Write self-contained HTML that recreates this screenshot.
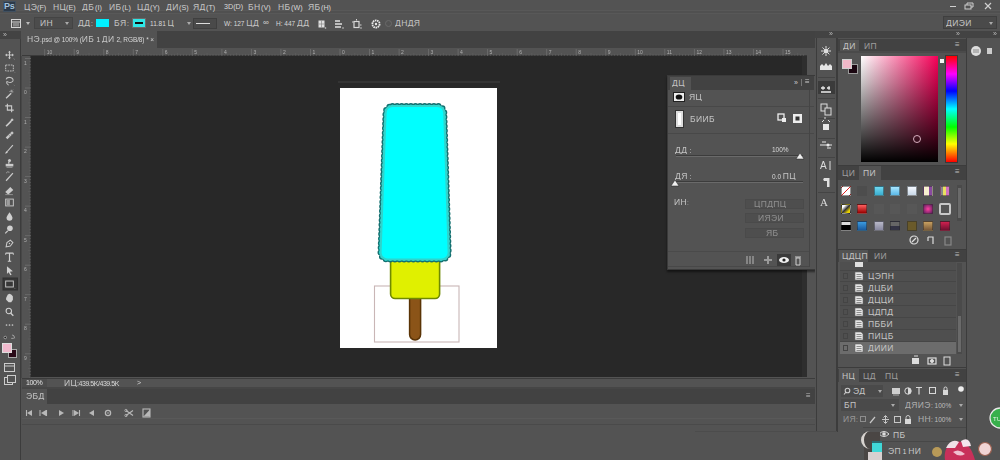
<!DOCTYPE html><html><head><meta charset="utf-8"><style>
*{margin:0;padding:0;box-sizing:border-box}
html,body{width:1000px;height:460px;overflow:hidden;background:#535353}
body{position:relative;font-family:"Liberation Sans",sans-serif;font-size:6.5px;color:#d8d8d8}
.t{position:absolute;white-space:nowrap;line-height:8px}
i.c{display:inline-block;height:7px;vertical-align:-1px;
 background-image:linear-gradient(90deg,transparent 0.4px,rgba(225,225,225,.6) 0.4px,rgba(225,225,225,.6) 2.4px,rgba(225,225,225,.3) 2.4px,rgba(225,225,225,.3) 3.4px,rgba(225,225,225,.65) 3.4px,rgba(225,225,225,.65) 5.6px,transparent 5.6px),
 linear-gradient(transparent 2.8px,rgba(40,40,40,.25) 2.8px,rgba(40,40,40,.25) 3.8px,transparent 3.8px);
 background-repeat:repeat-x}
svg{position:absolute;overflow:visible}
b.z{display:inline-block;font-size:8.5px;font-weight:normal;color:#c4c4c4;letter-spacing:0.4px;line-height:8px;vertical-align:-1px;overflow:hidden;white-space:nowrap}
</style></head><body><div id="w" style="position:absolute;left:0;top:0;width:1000px;height:460px;overflow:hidden;filter:blur(0.35px)">
<div style="position:absolute;left:0px;top:0px;width:1000px;height:15px;background:#535353"></div>
<div style="position:absolute;left:0px;top:10px;width:1000px;height:4px;background:#505050;border-top:1px solid #585858;border-bottom:1px solid #585858"></div>
<div style="position:absolute;left:3px;top:1px;width:13px;height:11px;background:#2c3a4a;border:1px solid #405060"></div>
<div class="t" style="left:4px;top:2px;font-size:9px;color:#a4c2dc;font-weight:bold;line-height:9px;letter-spacing:-0.3px">Ps</div>
<div class="t" style="left:24px;top:3px;"><b class="z" style="width:13.0px">ЦЭ</b><span style="font-size:7.2px">(F)</span></div>
<div class="t" style="left:53px;top:3px;"><b class="z" style="width:13.0px">НЦ</b><span style="font-size:7.2px">(E)</span></div>
<div class="t" style="left:82px;top:3px;"><b class="z" style="width:13.0px">ДБ</b><span style="font-size:7.2px">(I)</span></div>
<div class="t" style="left:109px;top:3px;"><b class="z" style="width:13.0px">ИБ</b><span style="font-size:7.2px">(L)</span></div>
<div class="t" style="left:137px;top:3px;"><b class="z" style="width:13.0px">ЦД</b><span style="font-size:7.2px">(Y)</span></div>
<div class="t" style="left:166px;top:3px;"><b class="z" style="width:13.0px">ДИ</b><span style="font-size:7.2px">(S)</span></div>
<div class="t" style="left:193px;top:3px;"><b class="z" style="width:13.0px">ЯД</b><span style="font-size:7.2px">(T)</span></div>
<div class="t" style="left:224px;top:3px;"><b class="z" style="width:0.0px"></b><span style="font-size:7.2px">3D(D)</span></div>
<div class="t" style="left:248px;top:3px;"><b class="z" style="width:13.0px">БН</b><span style="font-size:7.2px">(V)</span></div>
<div class="t" style="left:278px;top:3px;"><b class="z" style="width:13.0px">НБ</b><span style="font-size:7.2px">(W)</span></div>
<div class="t" style="left:308px;top:3px;"><b class="z" style="width:13.0px">ЯБ</b><span style="font-size:7.2px">(H)</span></div>
<div style="position:absolute;left:950px;top:6px;width:6px;height:1px;background:#cfcfcf"></div>
<svg style="left:964px;top:2px" width="10" height="9"><rect x="1" y="3" width="6" height="4" fill="none" stroke="#cfcfcf"/><path d="M3 3V1h6v4H7" fill="none" stroke="#cfcfcf"/></svg>
<svg style="left:984px;top:2px" width="9" height="9"><path d="M1 1L7 7M7 1L1 7" stroke="#cfcfcf" stroke-width="1.2"/></svg>
<div style="position:absolute;left:0px;top:14px;width:1000px;height:18px;background:#535353"></div>
<svg style="left:10px;top:18px" width="12" height="11"><rect x="1.5" y="1.5" width="9" height="8" fill="none" stroke="#d4d4d4"/><path d="M2 4h8" stroke="#d4d4d4"/><rect x="3" y="5" width="6" height="3.5" fill="#888"/></svg>
<div style="position:absolute;left:25.5px;top:22px;width:0;height:0;border-left:2.5px solid transparent;border-right:2.5px solid transparent;border-top:3px solid #bbb"></div>
<div style="position:absolute;left:34px;top:17px;width:39px;height:12px;background:#4c4c4c;border:1px solid #444"></div>
<div class="t" style="left:40px;top:19px;"><b class="z" style="width:13.0px">ИН</b></div>
<div style="position:absolute;left:64.5px;top:22px;width:0;height:0;border-left:2.5px solid transparent;border-right:2.5px solid transparent;border-top:3px solid #aaa"></div>
<div class="t" style="left:78px;top:19px;"><b class="z" style="width:13.0px">ДД</b>:</div>
<div style="position:absolute;left:96px;top:19px;width:13px;height:8px;background:#00f0ff"></div>
<div class="t" style="left:114px;top:19px;"><b class="z" style="width:13.0px">БЯ</b>:</div>
<div style="position:absolute;left:132px;top:18px;width:14px;height:10px;background:#2ee8e8;border:1px solid #6a6a6a"></div>
<div style="position:absolute;left:135px;top:22px;width:8px;height:2px;background:#111"></div>
<div class="t" style="left:150px;top:19px;">11.81 <b class="z" style="width:6.5px">Ц</b></div>
<div style="position:absolute;left:186.5px;top:22px;width:0;height:0;border-left:2.5px solid transparent;border-right:2.5px solid transparent;border-top:3px solid #aaa"></div>
<div style="position:absolute;left:193px;top:18px;width:24px;height:11px;background:#4a4a4a;border:1px solid #3f3f3f"></div>
<div style="position:absolute;left:196px;top:23px;width:14px;height:1px;background:#ddd"></div>
<div class="t" style="left:224px;top:19px;">W: 127 <b class="z" style="width:13.0px">ЦД</b></div>
<div class="t" style="left:263px;top:19px;font-size:8px">∞</div>
<div class="t" style="left:276px;top:19px;">H: 447 <b class="z" style="width:13.0px">ДД</b></div>
<svg style="left:314px;top:17px" width="60" height="13"><rect x="4.5" y="3.5" width="6" height="7" fill="#e0e0e0"/><path d="M7.5 3.5v7M4.5 7h6" stroke="#888" stroke-width=".7"/><circle cx="11.5" cy="11" r=".8" fill="#ccc"/><path d="M21 4h5M21 7h7M21 10h6" stroke="#e0e0e0" stroke-width="1.5"/><circle cx="29" cy="11" r=".8" fill="#ccc"/><rect x="40" y="4.5" width="5" height="6" fill="none" stroke="#d8d8d8" stroke-width="1.2"/><path d="M38 5h1.5M46 8h1.5M42.5 2v1.5" stroke="#d0d0d0"/><circle cx="47" cy="11" r=".8" fill="#ccc"/></svg>
<svg style="left:369px;top:17px" width="14" height="13"><circle cx="7" cy="7" r="3.6" fill="none" stroke="#e8e8e8" stroke-width="1.8" stroke-dasharray="1.6 .6"/><circle cx="7" cy="7" r="1.2" fill="#e8e8e8"/></svg>
<svg style="left:382px;top:17px" width="10" height="13"><circle cx="6.5" cy="6.5" r="3" fill="none" stroke="#6a6a6a"/></svg>
<div class="t" style="left:395px;top:19px;"><b class="z" style="width:26.0px">ДНДЯ</b></div>
<div style="position:absolute;left:943px;top:16px;width:54px;height:13px;background:#4a4a4a;border:1px solid #3f3f3f"></div>
<div class="t" style="left:946px;top:19px;"><b class="z" style="width:26.0px">ДИЭЙ</b></div>
<div style="position:absolute;left:988.5px;top:22px;width:0;height:0;border-left:2.5px solid transparent;border-right:2.5px solid transparent;border-top:3px solid #aaa"></div>
<div style="position:absolute;left:0px;top:31px;width:21px;height:429px;background:#535353;border-right:1px solid #3c3c3c"></div>
<svg style="left:0;top:0;opacity:.85" width="21" height="400"><g transform="translate(9.5 55) scale(.85)"><path d="M0 -4.5V4.5M-4.5 0H4.5" stroke="#ddd" stroke-width="1.2"/><path d="M-1.8 -3L0 -5L1.8 -3zM-1.8 3L0 5L1.8 3zM-3 -1.8L-5 0L-3 1.8zM3 -1.8L5 0L3 1.8z" fill="#ddd"/><path d="M5 4l1 1.5" stroke="#999" stroke-width=".8"/></g><g transform="translate(9.5 68) scale(.85)"><rect x="-4.5" y="-3.5" width="9" height="7" fill="none" stroke="#d8d8d8" stroke-width="1.1" stroke-dasharray="2 1"/><path d="M5.5 4.5l1 1" stroke="#999" stroke-width=".8"/></g><g transform="translate(9.5 81) scale(.85)"><path d="M-4 -2Q-3 -5 1 -4Q5 -3 4 0Q2 3 -2 1Q-4 0 -3 3L-1 5" fill="none" stroke="#d8d8d8" stroke-width="1.2"/><path d="M5 4.5l1 1" stroke="#999" stroke-width=".8"/></g><g transform="translate(9.5 94) scale(.85)"><path d="M-4 5L2 -1" stroke="#e0e0e0" stroke-width="1.6"/><path d="M2 -5v2.5M4.5 -2.5h-2.5M0 -3.5l1 1M4 -5l-1 1" stroke="#d0d0d0" stroke-width="1"/></g><g transform="translate(9.5 108) scale(.85)"><path d="M-2.5 -5V2.5H5M-5 -2.5H2.5V5" fill="none" stroke="#e0e0e0" stroke-width="1.3"/></g><g transform="translate(9.5 122) scale(.85)"><path d="M-4 5L2 -1" stroke="#e0e0e0" stroke-width="2"/><path d="M1 -2L3 -4.5L5 -2.5L2.5 -0.5z" fill="#e0e0e0"/></g><g transform="translate(9.5 135) scale(.85)"><path d="M-4.5 3L3 -4.5L5 -2.5L-2.5 5z" fill="#dcdcdc"/><path d="M-1 0l2 2M1 -2l2 2" stroke="#777" stroke-width=".8"/></g><g transform="translate(9.5 149) scale(.85)"><path d="M-4.5 5L4 -4.5" stroke="#e0e0e0" stroke-width="1.3"/><path d="M-5 5.5l1.5-3l1.5 1.5z" fill="#eee"/></g><g transform="translate(9.5 163) scale(.85)"><circle cx="0" cy="-3" r="1.8" fill="#e0e0e0"/><path d="M-0.8 -1.5v2.5" stroke="#e0e0e0" stroke-width="1.5"/><rect x="-4.5" y="1" width="9" height="3" fill="#e0e0e0"/><path d="M-3.5 5h7" stroke="#bbb"/></g><g transform="translate(9.5 176.5) scale(.85)"><path d="M-4 5L4 -4" stroke="#e0e0e0" stroke-width="1.5"/><path d="M-4 -4a3 3 0 0 1 4 -1" fill="none" stroke="#ccc" stroke-width=".9"/></g><g transform="translate(9.5 189.5) scale(.85)"><path d="M-5 3L1 -3L4.5 0.5L-1.5 6z" fill="#e0e0e0"/><path d="M-5 6h9" stroke="#aaa"/></g><g transform="translate(9.5 202.5) scale(.85)"><rect x="-4.5" y="-4" width="9" height="8" fill="none" stroke="#e0e0e0" stroke-width="1.1"/><rect x="-3.5" y="-3" width="4" height="6" fill="#aaa"/></g><g transform="translate(9.5 216.5) scale(.85)"><path d="M0 -5Q-3.5 0 -3.5 1.5A3.5 3.5 0 0 0 3.5 1.5Q3.5 0 0 -5z" fill="#e6e6e6"/></g><g transform="translate(9.5 229.5) scale(.85)"><circle cx="0.5" cy="-1.5" r="3.3" fill="#e6e6e6"/><path d="M-2 1.5L-5 4.5" stroke="#e0e0e0" stroke-width="1.4"/></g><g transform="translate(9.5 243.5) scale(.85)"><path d="M-4 4L-3 -1L1 -4L4 -1L1 3z" fill="none" stroke="#e0e0e0" stroke-width="1.2"/><circle cx="0" cy="0" r=".9" fill="#e0e0e0"/></g><g transform="translate(9.5 257) scale(.85)"><path d="M-4.5 -4.5H4.5M0 -4.5V5M-2 5H2" stroke="#e8e8e8" stroke-width="1.4"/><path d="M-4.5 -4.5v2M4.5 -4.5v2" stroke="#e8e8e8" stroke-width="1"/></g><g transform="translate(9.5 270.5) scale(.85)"><path d="M-3 -5L4 1L0.5 1.5L2.5 5L1 5.5L-1 2L-3 4z" fill="#e6e6e6"/></g><rect x="3" y="278" width="14.5" height="12" fill="#333" stroke="#2a2a2a"/><g transform="translate(9.5 284) scale(.85)"><rect x="-4.5" y="-3.5" width="9" height="7" fill="none" stroke="#e0e0e0" stroke-width="1.1"/><path d="M5.5 4.5l1 1" stroke="#999" stroke-width=".8"/></g><g transform="translate(9.5 298) scale(.85)"><path d="M-4 0L-2 -4L0 -5L2 -4L4 -2V2L2 5H-1L-4 2z" fill="#e6e6e6"/></g><g transform="translate(9.5 312) scale(.85)"><circle cx="-0.8" cy="-1.2" r="3.2" fill="none" stroke="#e6e6e6" stroke-width="1.3"/><path d="M1.5 1.5L4.5 4.5" stroke="#e6e6e6" stroke-width="1.6"/></g><g transform="translate(9.5 325) scale(.85)"><circle cx="-3.5" cy="0" r="1" fill="#ddd"/><circle cx="0" cy="0" r="1" fill="#ddd"/><circle cx="3.5" cy="0" r="1" fill="#ddd"/></g><g transform="translate(9.5 337.5) scale(.85)"><circle cx="-5" cy="0" r="1.5" fill="#111" stroke="#ddd" stroke-width=".8"/><path d="M3 -3Q6 -3 6 1M2 1h3" fill="none" stroke="#ccc" stroke-width=".9"/></g></svg>
<div style="position:absolute;left:8px;top:349px;width:9px;height:9px;background:#2a0a18;border:1px solid #aaa"></div>
<div style="position:absolute;left:2px;top:343px;width:10px;height:10px;background:#f0b8cc;border:1px solid #ddd"></div>
<svg style="left:3px;top:362px" width="14" height="26"><rect x="1.5" y="1.5" width="10" height="8" fill="none" stroke="#ccc"/><path d="M1.5 4h10" stroke="#ccc"/><rect x="1.5" y="15.5" width="8" height="7" fill="none" stroke="#ccc"/><rect x="4.5" y="13.5" width="8" height="7" fill="#535353" stroke="#ccc"/></svg>
<div style="position:absolute;left:0px;top:31px;width:21px;height:8px;background:#434343"></div>
<div class="t" style="left:3px;top:31px;font-size:7px;color:#bbb;line-height:8px">»</div>
<div style="position:absolute;left:22px;top:31px;width:794px;height:17px;background:#424242"></div>
<div style="position:absolute;left:22px;top:31px;width:135px;height:17px;background:#535353"></div>
<div class="t" style="left:27px;top:35px;letter-spacing:-0.1px"><b class="z" style="width:13.0px">НЭ</b>.psd @ 100% (<b class="z" style="width:13.0px">ИБ</b> 1 <b class="z" style="width:13.0px">ДЙ</b> 2, RGB/8) * ×</div>
<div style="position:absolute;left:22px;top:48px;width:785px;height:8px;background:#535353;border-bottom:1px solid #3a3a3a"></div>
<div style="position:absolute;left:21px;top:56px;width:10px;height:322px;background:#535353;border-left:1px solid #474747;border-right:1px solid #3a3a3a"></div>
<div style="position:absolute;left:31px;top:56px;width:776px;height:321px;background:#282828"></div>
<div style="position:absolute;left:802px;top:56px;width:5px;height:321px;background:#2e2e2e"></div>
<svg style="left:22px;top:48px" width="785" height="8"><path d="M22.7 1v7" stroke="#747474" stroke-width="0.7"/><path d="M25.7 6v2" stroke="#626262" stroke-width="0.6"/><path d="M28.6 6v2" stroke="#626262" stroke-width="0.6"/><path d="M31.6 6v2" stroke="#626262" stroke-width="0.6"/><path d="M34.5 6v2" stroke="#626262" stroke-width="0.6"/><path d="M37.5 5v3" stroke="#626262" stroke-width="0.6"/><path d="M40.4 6v2" stroke="#626262" stroke-width="0.6"/><path d="M43.4 6v2" stroke="#626262" stroke-width="0.6"/><path d="M46.3 6v2" stroke="#626262" stroke-width="0.6"/><path d="M49.3 6v2" stroke="#626262" stroke-width="0.6"/><text x="24.7" y="6" font-size="5" fill="#b0b0b0" font-family="Liberation Sans">10</text><path d="M52.2 1v7" stroke="#747474" stroke-width="0.7"/><path d="M55.2 6v2" stroke="#626262" stroke-width="0.6"/><path d="M58.1 6v2" stroke="#626262" stroke-width="0.6"/><path d="M61.1 6v2" stroke="#626262" stroke-width="0.6"/><path d="M64.0 6v2" stroke="#626262" stroke-width="0.6"/><path d="M67.0 5v3" stroke="#626262" stroke-width="0.6"/><path d="M69.9 6v2" stroke="#626262" stroke-width="0.6"/><path d="M72.9 6v2" stroke="#626262" stroke-width="0.6"/><path d="M75.9 6v2" stroke="#626262" stroke-width="0.6"/><path d="M78.8 6v2" stroke="#626262" stroke-width="0.6"/><text x="54.2" y="6" font-size="5" fill="#b0b0b0" font-family="Liberation Sans">9</text><path d="M81.8 1v7" stroke="#747474" stroke-width="0.7"/><path d="M84.7 6v2" stroke="#626262" stroke-width="0.6"/><path d="M87.7 6v2" stroke="#626262" stroke-width="0.6"/><path d="M90.6 6v2" stroke="#626262" stroke-width="0.6"/><path d="M93.6 6v2" stroke="#626262" stroke-width="0.6"/><path d="M96.5 5v3" stroke="#626262" stroke-width="0.6"/><path d="M99.5 6v2" stroke="#626262" stroke-width="0.6"/><path d="M102.4 6v2" stroke="#626262" stroke-width="0.6"/><path d="M105.4 6v2" stroke="#626262" stroke-width="0.6"/><path d="M108.3 6v2" stroke="#626262" stroke-width="0.6"/><text x="83.8" y="6" font-size="5" fill="#b0b0b0" font-family="Liberation Sans">8</text><path d="M111.3 1v7" stroke="#747474" stroke-width="0.7"/><path d="M114.2 6v2" stroke="#626262" stroke-width="0.6"/><path d="M117.2 6v2" stroke="#626262" stroke-width="0.6"/><path d="M120.1 6v2" stroke="#626262" stroke-width="0.6"/><path d="M123.1 6v2" stroke="#626262" stroke-width="0.6"/><path d="M126.1 5v3" stroke="#626262" stroke-width="0.6"/><path d="M129.0 6v2" stroke="#626262" stroke-width="0.6"/><path d="M132.0 6v2" stroke="#626262" stroke-width="0.6"/><path d="M134.9 6v2" stroke="#626262" stroke-width="0.6"/><path d="M137.9 6v2" stroke="#626262" stroke-width="0.6"/><text x="113.3" y="6" font-size="5" fill="#b0b0b0" font-family="Liberation Sans">7</text><path d="M140.8 1v7" stroke="#747474" stroke-width="0.7"/><path d="M143.8 6v2" stroke="#626262" stroke-width="0.6"/><path d="M146.7 6v2" stroke="#626262" stroke-width="0.6"/><path d="M149.7 6v2" stroke="#626262" stroke-width="0.6"/><path d="M152.6 6v2" stroke="#626262" stroke-width="0.6"/><path d="M155.6 5v3" stroke="#626262" stroke-width="0.6"/><path d="M158.5 6v2" stroke="#626262" stroke-width="0.6"/><path d="M161.5 6v2" stroke="#626262" stroke-width="0.6"/><path d="M164.4 6v2" stroke="#626262" stroke-width="0.6"/><path d="M167.4 6v2" stroke="#626262" stroke-width="0.6"/><text x="142.8" y="6" font-size="5" fill="#b0b0b0" font-family="Liberation Sans">6</text><path d="M170.3 1v7" stroke="#747474" stroke-width="0.7"/><path d="M173.3 6v2" stroke="#626262" stroke-width="0.6"/><path d="M176.3 6v2" stroke="#626262" stroke-width="0.6"/><path d="M179.2 6v2" stroke="#626262" stroke-width="0.6"/><path d="M182.2 6v2" stroke="#626262" stroke-width="0.6"/><path d="M185.1 5v3" stroke="#626262" stroke-width="0.6"/><path d="M188.1 6v2" stroke="#626262" stroke-width="0.6"/><path d="M191.0 6v2" stroke="#626262" stroke-width="0.6"/><path d="M194.0 6v2" stroke="#626262" stroke-width="0.6"/><path d="M196.9 6v2" stroke="#626262" stroke-width="0.6"/><text x="172.3" y="6" font-size="5" fill="#b0b0b0" font-family="Liberation Sans">5</text><path d="M199.9 1v7" stroke="#747474" stroke-width="0.7"/><path d="M202.8 6v2" stroke="#626262" stroke-width="0.6"/><path d="M205.8 6v2" stroke="#626262" stroke-width="0.6"/><path d="M208.7 6v2" stroke="#626262" stroke-width="0.6"/><path d="M211.7 6v2" stroke="#626262" stroke-width="0.6"/><path d="M214.6 5v3" stroke="#626262" stroke-width="0.6"/><path d="M217.6 6v2" stroke="#626262" stroke-width="0.6"/><path d="M220.6 6v2" stroke="#626262" stroke-width="0.6"/><path d="M223.5 6v2" stroke="#626262" stroke-width="0.6"/><path d="M226.5 6v2" stroke="#626262" stroke-width="0.6"/><text x="201.9" y="6" font-size="5" fill="#b0b0b0" font-family="Liberation Sans">4</text><path d="M229.4 1v7" stroke="#747474" stroke-width="0.7"/><path d="M232.4 6v2" stroke="#626262" stroke-width="0.6"/><path d="M235.3 6v2" stroke="#626262" stroke-width="0.6"/><path d="M238.3 6v2" stroke="#626262" stroke-width="0.6"/><path d="M241.2 6v2" stroke="#626262" stroke-width="0.6"/><path d="M244.2 5v3" stroke="#626262" stroke-width="0.6"/><path d="M247.1 6v2" stroke="#626262" stroke-width="0.6"/><path d="M250.1 6v2" stroke="#626262" stroke-width="0.6"/><path d="M253.0 6v2" stroke="#626262" stroke-width="0.6"/><path d="M256.0 6v2" stroke="#626262" stroke-width="0.6"/><text x="231.4" y="6" font-size="5" fill="#b0b0b0" font-family="Liberation Sans">3</text><path d="M258.9 1v7" stroke="#747474" stroke-width="0.7"/><path d="M261.9 6v2" stroke="#626262" stroke-width="0.6"/><path d="M264.8 6v2" stroke="#626262" stroke-width="0.6"/><path d="M267.8 6v2" stroke="#626262" stroke-width="0.6"/><path d="M270.8 6v2" stroke="#626262" stroke-width="0.6"/><path d="M273.7 5v3" stroke="#626262" stroke-width="0.6"/><path d="M276.7 6v2" stroke="#626262" stroke-width="0.6"/><path d="M279.6 6v2" stroke="#626262" stroke-width="0.6"/><path d="M282.6 6v2" stroke="#626262" stroke-width="0.6"/><path d="M285.5 6v2" stroke="#626262" stroke-width="0.6"/><text x="260.9" y="6" font-size="5" fill="#b0b0b0" font-family="Liberation Sans">2</text><path d="M288.5 1v7" stroke="#747474" stroke-width="0.7"/><path d="M291.4 6v2" stroke="#626262" stroke-width="0.6"/><path d="M294.4 6v2" stroke="#626262" stroke-width="0.6"/><path d="M297.3 6v2" stroke="#626262" stroke-width="0.6"/><path d="M300.3 6v2" stroke="#626262" stroke-width="0.6"/><path d="M303.2 5v3" stroke="#626262" stroke-width="0.6"/><path d="M306.2 6v2" stroke="#626262" stroke-width="0.6"/><path d="M309.1 6v2" stroke="#626262" stroke-width="0.6"/><path d="M312.1 6v2" stroke="#626262" stroke-width="0.6"/><path d="M315.0 6v2" stroke="#626262" stroke-width="0.6"/><text x="290.5" y="6" font-size="5" fill="#b0b0b0" font-family="Liberation Sans">1</text><path d="M318.0 1v7" stroke="#747474" stroke-width="0.7"/><path d="M321.0 6v2" stroke="#626262" stroke-width="0.6"/><path d="M323.9 6v2" stroke="#626262" stroke-width="0.6"/><path d="M326.9 6v2" stroke="#626262" stroke-width="0.6"/><path d="M329.8 6v2" stroke="#626262" stroke-width="0.6"/><path d="M332.8 5v3" stroke="#626262" stroke-width="0.6"/><path d="M335.7 6v2" stroke="#626262" stroke-width="0.6"/><path d="M338.7 6v2" stroke="#626262" stroke-width="0.6"/><path d="M341.6 6v2" stroke="#626262" stroke-width="0.6"/><path d="M344.6 6v2" stroke="#626262" stroke-width="0.6"/><text x="320.0" y="6" font-size="5" fill="#b0b0b0" font-family="Liberation Sans">0</text><path d="M347.5 1v7" stroke="#747474" stroke-width="0.7"/><path d="M350.5 6v2" stroke="#626262" stroke-width="0.6"/><path d="M353.4 6v2" stroke="#626262" stroke-width="0.6"/><path d="M356.4 6v2" stroke="#626262" stroke-width="0.6"/><path d="M359.3 6v2" stroke="#626262" stroke-width="0.6"/><path d="M362.3 5v3" stroke="#626262" stroke-width="0.6"/><path d="M365.2 6v2" stroke="#626262" stroke-width="0.6"/><path d="M368.2 6v2" stroke="#626262" stroke-width="0.6"/><path d="M371.2 6v2" stroke="#626262" stroke-width="0.6"/><path d="M374.1 6v2" stroke="#626262" stroke-width="0.6"/><text x="349.5" y="6" font-size="5" fill="#b0b0b0" font-family="Liberation Sans">1</text><path d="M377.1 1v7" stroke="#747474" stroke-width="0.7"/><path d="M380.0 6v2" stroke="#626262" stroke-width="0.6"/><path d="M383.0 6v2" stroke="#626262" stroke-width="0.6"/><path d="M385.9 6v2" stroke="#626262" stroke-width="0.6"/><path d="M388.9 6v2" stroke="#626262" stroke-width="0.6"/><path d="M391.8 5v3" stroke="#626262" stroke-width="0.6"/><path d="M394.8 6v2" stroke="#626262" stroke-width="0.6"/><path d="M397.7 6v2" stroke="#626262" stroke-width="0.6"/><path d="M400.7 6v2" stroke="#626262" stroke-width="0.6"/><path d="M403.6 6v2" stroke="#626262" stroke-width="0.6"/><text x="379.1" y="6" font-size="5" fill="#b0b0b0" font-family="Liberation Sans">2</text><path d="M406.6 1v7" stroke="#747474" stroke-width="0.7"/><path d="M409.5 6v2" stroke="#626262" stroke-width="0.6"/><path d="M412.5 6v2" stroke="#626262" stroke-width="0.6"/><path d="M415.4 6v2" stroke="#626262" stroke-width="0.6"/><path d="M418.4 6v2" stroke="#626262" stroke-width="0.6"/><path d="M421.4 5v3" stroke="#626262" stroke-width="0.6"/><path d="M424.3 6v2" stroke="#626262" stroke-width="0.6"/><path d="M427.3 6v2" stroke="#626262" stroke-width="0.6"/><path d="M430.2 6v2" stroke="#626262" stroke-width="0.6"/><path d="M433.2 6v2" stroke="#626262" stroke-width="0.6"/><text x="408.6" y="6" font-size="5" fill="#b0b0b0" font-family="Liberation Sans">3</text><path d="M436.1 1v7" stroke="#747474" stroke-width="0.7"/><path d="M439.1 6v2" stroke="#626262" stroke-width="0.6"/><path d="M442.0 6v2" stroke="#626262" stroke-width="0.6"/><path d="M445.0 6v2" stroke="#626262" stroke-width="0.6"/><path d="M447.9 6v2" stroke="#626262" stroke-width="0.6"/><path d="M450.9 5v3" stroke="#626262" stroke-width="0.6"/><path d="M453.8 6v2" stroke="#626262" stroke-width="0.6"/><path d="M456.8 6v2" stroke="#626262" stroke-width="0.6"/><path d="M459.7 6v2" stroke="#626262" stroke-width="0.6"/><path d="M462.7 6v2" stroke="#626262" stroke-width="0.6"/><text x="438.1" y="6" font-size="5" fill="#b0b0b0" font-family="Liberation Sans">4</text><path d="M465.6 1v7" stroke="#747474" stroke-width="0.7"/><path d="M468.6 6v2" stroke="#626262" stroke-width="0.6"/><path d="M471.6 6v2" stroke="#626262" stroke-width="0.6"/><path d="M474.5 6v2" stroke="#626262" stroke-width="0.6"/><path d="M477.5 6v2" stroke="#626262" stroke-width="0.6"/><path d="M480.4 5v3" stroke="#626262" stroke-width="0.6"/><path d="M483.4 6v2" stroke="#626262" stroke-width="0.6"/><path d="M486.3 6v2" stroke="#626262" stroke-width="0.6"/><path d="M489.3 6v2" stroke="#626262" stroke-width="0.6"/><path d="M492.2 6v2" stroke="#626262" stroke-width="0.6"/><text x="467.6" y="6" font-size="5" fill="#b0b0b0" font-family="Liberation Sans">5</text><path d="M495.2 1v7" stroke="#747474" stroke-width="0.7"/><path d="M498.1 6v2" stroke="#626262" stroke-width="0.6"/><path d="M501.1 6v2" stroke="#626262" stroke-width="0.6"/><path d="M504.0 6v2" stroke="#626262" stroke-width="0.6"/><path d="M507.0 6v2" stroke="#626262" stroke-width="0.6"/><path d="M509.9 5v3" stroke="#626262" stroke-width="0.6"/><path d="M512.9 6v2" stroke="#626262" stroke-width="0.6"/><path d="M515.9 6v2" stroke="#626262" stroke-width="0.6"/><path d="M518.8 6v2" stroke="#626262" stroke-width="0.6"/><path d="M521.8 6v2" stroke="#626262" stroke-width="0.6"/><text x="497.2" y="6" font-size="5" fill="#b0b0b0" font-family="Liberation Sans">6</text><path d="M524.7 1v7" stroke="#747474" stroke-width="0.7"/><path d="M527.7 6v2" stroke="#626262" stroke-width="0.6"/><path d="M530.6 6v2" stroke="#626262" stroke-width="0.6"/><path d="M533.6 6v2" stroke="#626262" stroke-width="0.6"/><path d="M536.5 6v2" stroke="#626262" stroke-width="0.6"/><path d="M539.5 5v3" stroke="#626262" stroke-width="0.6"/><path d="M542.4 6v2" stroke="#626262" stroke-width="0.6"/><path d="M545.4 6v2" stroke="#626262" stroke-width="0.6"/><path d="M548.3 6v2" stroke="#626262" stroke-width="0.6"/><path d="M551.3 6v2" stroke="#626262" stroke-width="0.6"/><text x="526.7" y="6" font-size="5" fill="#b0b0b0" font-family="Liberation Sans">7</text><path d="M554.2 1v7" stroke="#747474" stroke-width="0.7"/><path d="M557.2 6v2" stroke="#626262" stroke-width="0.6"/><path d="M560.1 6v2" stroke="#626262" stroke-width="0.6"/><path d="M563.1 6v2" stroke="#626262" stroke-width="0.6"/><path d="M566.1 6v2" stroke="#626262" stroke-width="0.6"/><path d="M569.0 5v3" stroke="#626262" stroke-width="0.6"/><path d="M572.0 6v2" stroke="#626262" stroke-width="0.6"/><path d="M574.9 6v2" stroke="#626262" stroke-width="0.6"/><path d="M577.9 6v2" stroke="#626262" stroke-width="0.6"/><path d="M580.8 6v2" stroke="#626262" stroke-width="0.6"/><text x="556.2" y="6" font-size="5" fill="#b0b0b0" font-family="Liberation Sans">8</text><path d="M583.8 1v7" stroke="#747474" stroke-width="0.7"/><path d="M586.7 6v2" stroke="#626262" stroke-width="0.6"/><path d="M589.7 6v2" stroke="#626262" stroke-width="0.6"/><path d="M592.6 6v2" stroke="#626262" stroke-width="0.6"/><path d="M595.6 6v2" stroke="#626262" stroke-width="0.6"/><path d="M598.5 5v3" stroke="#626262" stroke-width="0.6"/><path d="M601.5 6v2" stroke="#626262" stroke-width="0.6"/><path d="M604.4 6v2" stroke="#626262" stroke-width="0.6"/><path d="M607.4 6v2" stroke="#626262" stroke-width="0.6"/><path d="M610.3 6v2" stroke="#626262" stroke-width="0.6"/><text x="585.8" y="6" font-size="5" fill="#b0b0b0" font-family="Liberation Sans">9</text><path d="M613.3 1v7" stroke="#747474" stroke-width="0.7"/><path d="M616.3 6v2" stroke="#626262" stroke-width="0.6"/><path d="M619.2 6v2" stroke="#626262" stroke-width="0.6"/><path d="M622.2 6v2" stroke="#626262" stroke-width="0.6"/><path d="M625.1 6v2" stroke="#626262" stroke-width="0.6"/><path d="M628.1 5v3" stroke="#626262" stroke-width="0.6"/><path d="M631.0 6v2" stroke="#626262" stroke-width="0.6"/><path d="M634.0 6v2" stroke="#626262" stroke-width="0.6"/><path d="M636.9 6v2" stroke="#626262" stroke-width="0.6"/><path d="M639.9 6v2" stroke="#626262" stroke-width="0.6"/><text x="615.3" y="6" font-size="5" fill="#b0b0b0" font-family="Liberation Sans">10</text><path d="M642.8 1v7" stroke="#747474" stroke-width="0.7"/><path d="M645.8 6v2" stroke="#626262" stroke-width="0.6"/><path d="M648.7 6v2" stroke="#626262" stroke-width="0.6"/><path d="M651.7 6v2" stroke="#626262" stroke-width="0.6"/><path d="M654.6 6v2" stroke="#626262" stroke-width="0.6"/><path d="M657.6 5v3" stroke="#626262" stroke-width="0.6"/><path d="M660.5 6v2" stroke="#626262" stroke-width="0.6"/><path d="M663.5 6v2" stroke="#626262" stroke-width="0.6"/><path d="M666.5 6v2" stroke="#626262" stroke-width="0.6"/><path d="M669.4 6v2" stroke="#626262" stroke-width="0.6"/><text x="644.8" y="6" font-size="5" fill="#b0b0b0" font-family="Liberation Sans">11</text><path d="M672.4 1v7" stroke="#747474" stroke-width="0.7"/><path d="M675.3 6v2" stroke="#626262" stroke-width="0.6"/><path d="M678.3 6v2" stroke="#626262" stroke-width="0.6"/><path d="M681.2 6v2" stroke="#626262" stroke-width="0.6"/><path d="M684.2 6v2" stroke="#626262" stroke-width="0.6"/><path d="M687.1 5v3" stroke="#626262" stroke-width="0.6"/><path d="M690.1 6v2" stroke="#626262" stroke-width="0.6"/><path d="M693.0 6v2" stroke="#626262" stroke-width="0.6"/><path d="M696.0 6v2" stroke="#626262" stroke-width="0.6"/><path d="M698.9 6v2" stroke="#626262" stroke-width="0.6"/><text x="674.4" y="6" font-size="5" fill="#b0b0b0" font-family="Liberation Sans">12</text><path d="M701.9 1v7" stroke="#747474" stroke-width="0.7"/><path d="M704.8 6v2" stroke="#626262" stroke-width="0.6"/><path d="M707.8 6v2" stroke="#626262" stroke-width="0.6"/><path d="M710.7 6v2" stroke="#626262" stroke-width="0.6"/><path d="M713.7 6v2" stroke="#626262" stroke-width="0.6"/><path d="M716.7 5v3" stroke="#626262" stroke-width="0.6"/><path d="M719.6 6v2" stroke="#626262" stroke-width="0.6"/><path d="M722.6 6v2" stroke="#626262" stroke-width="0.6"/><path d="M725.5 6v2" stroke="#626262" stroke-width="0.6"/><path d="M728.5 6v2" stroke="#626262" stroke-width="0.6"/><text x="703.9" y="6" font-size="5" fill="#b0b0b0" font-family="Liberation Sans">13</text><path d="M731.4 1v7" stroke="#747474" stroke-width="0.7"/><path d="M734.4 6v2" stroke="#626262" stroke-width="0.6"/><path d="M737.3 6v2" stroke="#626262" stroke-width="0.6"/><path d="M740.3 6v2" stroke="#626262" stroke-width="0.6"/><path d="M743.2 6v2" stroke="#626262" stroke-width="0.6"/><path d="M746.2 5v3" stroke="#626262" stroke-width="0.6"/><path d="M749.1 6v2" stroke="#626262" stroke-width="0.6"/><path d="M752.1 6v2" stroke="#626262" stroke-width="0.6"/><path d="M755.0 6v2" stroke="#626262" stroke-width="0.6"/><path d="M758.0 6v2" stroke="#626262" stroke-width="0.6"/><text x="733.4" y="6" font-size="5" fill="#b0b0b0" font-family="Liberation Sans">14</text><path d="M761.0 1v7" stroke="#747474" stroke-width="0.7"/><path d="M763.9 6v2" stroke="#626262" stroke-width="0.6"/><path d="M766.9 6v2" stroke="#626262" stroke-width="0.6"/><path d="M769.8 6v2" stroke="#626262" stroke-width="0.6"/><path d="M772.8 6v2" stroke="#626262" stroke-width="0.6"/><path d="M775.7 5v3" stroke="#626262" stroke-width="0.6"/><path d="M778.7 6v2" stroke="#626262" stroke-width="0.6"/><path d="M781.6 6v2" stroke="#626262" stroke-width="0.6"/><text x="763.0" y="6" font-size="5" fill="#b0b0b0" font-family="Liberation Sans">15</text></svg>
<svg style="left:23px;top:56px" width="8" height="322"><path d="M2 2.5h6" stroke="#747474" stroke-width="0.7"/><text x="1" y="8.5" font-size="5" fill="#b0b0b0" font-family="Liberation Sans">1</text><path d="M6 5.4h2" stroke="#626262" stroke-width="0.6"/><path d="M6 8.4h2" stroke="#626262" stroke-width="0.6"/><path d="M6 11.3h2" stroke="#626262" stroke-width="0.6"/><path d="M6 14.3h2" stroke="#626262" stroke-width="0.6"/><path d="M5 17.2h3" stroke="#626262" stroke-width="0.6"/><path d="M6 20.2h2" stroke="#626262" stroke-width="0.6"/><path d="M6 23.1h2" stroke="#626262" stroke-width="0.6"/><path d="M6 26.1h2" stroke="#626262" stroke-width="0.6"/><path d="M6 29.0h2" stroke="#626262" stroke-width="0.6"/><path d="M2 32.0h6" stroke="#747474" stroke-width="0.7"/><text x="1" y="38.0" font-size="5" fill="#b0b0b0" font-family="Liberation Sans">0</text><path d="M6 35.0h2" stroke="#626262" stroke-width="0.6"/><path d="M6 37.9h2" stroke="#626262" stroke-width="0.6"/><path d="M6 40.9h2" stroke="#626262" stroke-width="0.6"/><path d="M6 43.8h2" stroke="#626262" stroke-width="0.6"/><path d="M5 46.8h3" stroke="#626262" stroke-width="0.6"/><path d="M6 49.7h2" stroke="#626262" stroke-width="0.6"/><path d="M6 52.7h2" stroke="#626262" stroke-width="0.6"/><path d="M6 55.6h2" stroke="#626262" stroke-width="0.6"/><path d="M6 58.6h2" stroke="#626262" stroke-width="0.6"/><path d="M2 61.5h6" stroke="#747474" stroke-width="0.7"/><text x="1" y="67.5" font-size="5" fill="#b0b0b0" font-family="Liberation Sans">1</text><path d="M6 64.5h2" stroke="#626262" stroke-width="0.6"/><path d="M6 67.4h2" stroke="#626262" stroke-width="0.6"/><path d="M6 70.4h2" stroke="#626262" stroke-width="0.6"/><path d="M6 73.3h2" stroke="#626262" stroke-width="0.6"/><path d="M5 76.3h3" stroke="#626262" stroke-width="0.6"/><path d="M6 79.2h2" stroke="#626262" stroke-width="0.6"/><path d="M6 82.2h2" stroke="#626262" stroke-width="0.6"/><path d="M6 85.2h2" stroke="#626262" stroke-width="0.6"/><path d="M6 88.1h2" stroke="#626262" stroke-width="0.6"/><path d="M2 91.1h6" stroke="#747474" stroke-width="0.7"/><text x="1" y="97.1" font-size="5" fill="#b0b0b0" font-family="Liberation Sans">2</text><path d="M6 94.0h2" stroke="#626262" stroke-width="0.6"/><path d="M6 97.0h2" stroke="#626262" stroke-width="0.6"/><path d="M6 99.9h2" stroke="#626262" stroke-width="0.6"/><path d="M6 102.9h2" stroke="#626262" stroke-width="0.6"/><path d="M5 105.8h3" stroke="#626262" stroke-width="0.6"/><path d="M6 108.8h2" stroke="#626262" stroke-width="0.6"/><path d="M6 111.7h2" stroke="#626262" stroke-width="0.6"/><path d="M6 114.7h2" stroke="#626262" stroke-width="0.6"/><path d="M6 117.6h2" stroke="#626262" stroke-width="0.6"/><path d="M2 120.6h6" stroke="#747474" stroke-width="0.7"/><text x="1" y="126.6" font-size="5" fill="#b0b0b0" font-family="Liberation Sans">3</text><path d="M6 123.5h2" stroke="#626262" stroke-width="0.6"/><path d="M6 126.5h2" stroke="#626262" stroke-width="0.6"/><path d="M6 129.4h2" stroke="#626262" stroke-width="0.6"/><path d="M6 132.4h2" stroke="#626262" stroke-width="0.6"/><path d="M5 135.4h3" stroke="#626262" stroke-width="0.6"/><path d="M6 138.3h2" stroke="#626262" stroke-width="0.6"/><path d="M6 141.3h2" stroke="#626262" stroke-width="0.6"/><path d="M6 144.2h2" stroke="#626262" stroke-width="0.6"/><path d="M6 147.2h2" stroke="#626262" stroke-width="0.6"/><path d="M2 150.1h6" stroke="#747474" stroke-width="0.7"/><text x="1" y="156.1" font-size="5" fill="#b0b0b0" font-family="Liberation Sans">4</text><path d="M6 153.1h2" stroke="#626262" stroke-width="0.6"/><path d="M6 156.0h2" stroke="#626262" stroke-width="0.6"/><path d="M6 159.0h2" stroke="#626262" stroke-width="0.6"/><path d="M6 161.9h2" stroke="#626262" stroke-width="0.6"/><path d="M5 164.9h3" stroke="#626262" stroke-width="0.6"/><path d="M6 167.8h2" stroke="#626262" stroke-width="0.6"/><path d="M6 170.8h2" stroke="#626262" stroke-width="0.6"/><path d="M6 173.7h2" stroke="#626262" stroke-width="0.6"/><path d="M6 176.7h2" stroke="#626262" stroke-width="0.6"/><path d="M2 179.7h6" stroke="#747474" stroke-width="0.7"/><text x="1" y="185.7" font-size="5" fill="#b0b0b0" font-family="Liberation Sans">5</text><path d="M6 182.6h2" stroke="#626262" stroke-width="0.6"/><path d="M6 185.6h2" stroke="#626262" stroke-width="0.6"/><path d="M6 188.5h2" stroke="#626262" stroke-width="0.6"/><path d="M6 191.5h2" stroke="#626262" stroke-width="0.6"/><path d="M5 194.4h3" stroke="#626262" stroke-width="0.6"/><path d="M6 197.4h2" stroke="#626262" stroke-width="0.6"/><path d="M6 200.3h2" stroke="#626262" stroke-width="0.6"/><path d="M6 203.3h2" stroke="#626262" stroke-width="0.6"/><path d="M6 206.2h2" stroke="#626262" stroke-width="0.6"/><path d="M2 209.2h6" stroke="#747474" stroke-width="0.7"/><text x="1" y="215.2" font-size="5" fill="#b0b0b0" font-family="Liberation Sans">6</text><path d="M6 212.1h2" stroke="#626262" stroke-width="0.6"/><path d="M6 215.1h2" stroke="#626262" stroke-width="0.6"/><path d="M6 218.0h2" stroke="#626262" stroke-width="0.6"/><path d="M6 221.0h2" stroke="#626262" stroke-width="0.6"/><path d="M5 223.9h3" stroke="#626262" stroke-width="0.6"/><path d="M6 226.9h2" stroke="#626262" stroke-width="0.6"/><path d="M6 229.9h2" stroke="#626262" stroke-width="0.6"/><path d="M6 232.8h2" stroke="#626262" stroke-width="0.6"/><path d="M6 235.8h2" stroke="#626262" stroke-width="0.6"/><path d="M2 238.7h6" stroke="#747474" stroke-width="0.7"/><text x="1" y="244.7" font-size="5" fill="#b0b0b0" font-family="Liberation Sans">7</text><path d="M6 241.7h2" stroke="#626262" stroke-width="0.6"/><path d="M6 244.6h2" stroke="#626262" stroke-width="0.6"/><path d="M6 247.6h2" stroke="#626262" stroke-width="0.6"/><path d="M6 250.5h2" stroke="#626262" stroke-width="0.6"/><path d="M5 253.5h3" stroke="#626262" stroke-width="0.6"/><path d="M6 256.4h2" stroke="#626262" stroke-width="0.6"/><path d="M6 259.4h2" stroke="#626262" stroke-width="0.6"/><path d="M6 262.3h2" stroke="#626262" stroke-width="0.6"/><path d="M6 265.3h2" stroke="#626262" stroke-width="0.6"/><path d="M2 268.2h6" stroke="#747474" stroke-width="0.7"/><text x="1" y="274.2" font-size="5" fill="#b0b0b0" font-family="Liberation Sans">8</text><path d="M6 271.2h2" stroke="#626262" stroke-width="0.6"/><path d="M6 274.1h2" stroke="#626262" stroke-width="0.6"/><path d="M6 277.1h2" stroke="#626262" stroke-width="0.6"/><path d="M6 280.1h2" stroke="#626262" stroke-width="0.6"/><path d="M5 283.0h3" stroke="#626262" stroke-width="0.6"/><path d="M6 286.0h2" stroke="#626262" stroke-width="0.6"/><path d="M6 288.9h2" stroke="#626262" stroke-width="0.6"/><path d="M6 291.9h2" stroke="#626262" stroke-width="0.6"/><path d="M6 294.8h2" stroke="#626262" stroke-width="0.6"/><path d="M2 297.8h6" stroke="#747474" stroke-width="0.7"/><text x="1" y="303.8" font-size="5" fill="#b0b0b0" font-family="Liberation Sans">9</text><path d="M6 300.7h2" stroke="#626262" stroke-width="0.6"/><path d="M6 303.7h2" stroke="#626262" stroke-width="0.6"/><path d="M6 306.6h2" stroke="#626262" stroke-width="0.6"/><path d="M6 309.6h2" stroke="#626262" stroke-width="0.6"/><path d="M5 312.5h3" stroke="#626262" stroke-width="0.6"/><path d="M6 315.5h2" stroke="#626262" stroke-width="0.6"/><path d="M6 318.4h2" stroke="#626262" stroke-width="0.6"/><path d="M6 321.4h2" stroke="#626262" stroke-width="0.6"/></svg>
<div style="position:absolute;left:338px;top:81px;width:162px;height:2px;background:#343434"></div>
<div style="position:absolute;left:340px;top:88px;width:157px;height:260px;background:#fff"></div>
<svg style="left:340px;top:88px" width="157" height="260">
<rect x="34.5" y="198" width="84.5" height="56" fill="none" stroke="#c9b6b6" stroke-width="1.1"/>
<path d="M69.6 205h11v41.5a5.5 5.5 0 0 1-11 0z" fill="#8b5418" stroke="#5a3406" stroke-width="1.5"/>
<path d="M50.6 168h49v38a4.5 4.5 0 0 1-4.5 4.5h-40a4.5 4.5 0 0 1-4.5-4.5z" fill="#e0f000" stroke="#6f8a00" stroke-width="1.6"/>
<path d="M52.5 18H97.3A7 7 0 0 1 104.3 25L108.7 164.5A7 7 0 0 1 101.7 171.5H47.5A7 7 0 0 1 40.5 164.5L45.5 25A7 7 0 0 1 52.5 18Z" fill="none" stroke="#127070" stroke-width="6" stroke-dasharray="0 4.6" stroke-linecap="round"/>
<path d="M52.5 18H97.3A7 7 0 0 1 104.3 25L108.7 164.5A7 7 0 0 1 101.7 171.5H47.5A7 7 0 0 1 40.5 164.5L45.5 25A7 7 0 0 1 52.5 18Z" fill="none" stroke="#30d4cc" stroke-width="3.2" stroke-dasharray="0 4.6" stroke-linecap="round"/>
<path d="M52.5 18H97.3A7 7 0 0 1 104.3 25L108.7 164.5A7 7 0 0 1 101.7 171.5H47.5A7 7 0 0 1 40.5 164.5L45.5 25A7 7 0 0 1 52.5 18Z" fill="#00ffff" stroke="#30d4cc" stroke-width="2.2"/>

</svg>
<div style="position:absolute;left:22px;top:378px;width:793px;height:11px;background:#535353;border-top:1px solid #3c3c3c"></div>
<div style="position:absolute;left:22px;top:379px;width:25px;height:10px;background:#4c4c4c"></div>
<div style="position:absolute;left:22px;top:387px;width:793px;height:2px;background:#464646"></div>
<div class="t" style="left:26px;top:379px;font-size:7px;letter-spacing:-0.4px;color:#e4e4e4">100%</div>
<div class="t" style="left:64px;top:379px;font-size:7px;letter-spacing:-0.45px"><b class="z" style="width:13.0px">ИЦ</b>:439.5K/439.5K</div>
<div class="t" style="left:137px;top:379px;font-size:7px">&gt;</div>
<div style="position:absolute;left:22px;top:389px;width:793px;height:15px;background:#424242"></div>
<div style="position:absolute;left:22px;top:389px;width:25px;height:15px;background:#535353"></div>
<div class="t" style="left:26px;top:392px;"><b class="z" style="width:19.5px">ЭБД</b></div>
<div class="t" style="left:806px;top:392px;font-size:8px;color:#bbb">≡</div>
<div style="position:absolute;left:22px;top:404px;width:793px;height:20px;background:#535353"></div>
<svg style="left:22px;top:404px" width="140" height="20" fill="#b8b8b8" stroke="#b8b8b8">
<path d="M4.5 6v6" stroke-width="1.1"/><path d="M5 9l5-3v6z" stroke="none"/>
<path d="M19 9l5-3v6z" stroke="none"/><path d="M24.5 6v6" stroke-width="1.1"/><path d="M18 6v6" stroke-width="1"/>
<path d="M37 6l5 3-5 3z" stroke="none"/>
<path d="M52 6l5 3-5 3z" stroke="none"/><path d="M57.5 6v6" stroke-width="1.1"/><path d="M51 6v6" stroke-width="1"/>
<path d="M72 6l-5 3 5 3z" stroke="none"/>
<circle cx="86" cy="9" r="2.6" fill="none" stroke-width="1.3"/><circle cx="86" cy="9" r="0.8" stroke="none"/>
<path d="M104 6.5l7 5M104 11.5l7-5" stroke-width="1.2"/><circle cx="104" cy="6.5" r="1.2" fill="none" stroke-width=".8"/><circle cx="104" cy="11.5" r="1.2" fill="none" stroke-width=".8"/>
<rect x="121" y="5" width="7" height="8" fill="none" stroke-width="1.1"/><path d="M121.5 12.5l6.5-7v7z" stroke="none"/>
</svg>
<div style="position:absolute;left:22px;top:418px;width:793px;height:1px;background:#595959"></div>
<div style="position:absolute;left:22px;top:424px;width:793px;height:36px;background:#535353;border-top:1px solid #4a4a4a"></div>
<div style="position:absolute;left:667px;top:75px;width:149px;height:195px;background:#535353;border:1px solid #3a3a3a;box-shadow:0 2px 2px rgba(0,0,0,.5)"></div>
<div style="position:absolute;left:668px;top:76px;width:146px;height:14px;background:#424242"></div>
<div style="position:absolute;left:670px;top:77px;width:21px;height:13px;background:#535353"></div>
<div class="t" style="left:672px;top:79px;"><b class="z" style="width:13.0px">ДЦ</b></div>
<div class="t" style="left:794px;top:79px;font-size:7px;color:#ccc">»</div>
<div style="position:absolute;left:801px;top:79px;width:1px;height:7px;background:#777"></div>
<div class="t" style="left:805px;top:78px;font-size:8px;color:#ccc">≡</div>
<div style="position:absolute;left:668px;top:90px;width:146px;height:17px;background:#535353;border-bottom:1px solid #484848"></div>
<svg style="left:673px;top:92px" width="12" height="10"><rect x="0.5" y="0.5" width="11" height="9" fill="#eee" stroke="#222"/><ellipse cx="6" cy="5" rx="3.3" ry="2.6" fill="#111"/></svg>
<div class="t" style="left:689px;top:93px;"><b class="z" style="width:13.0px">ЯЦ</b></div>
<div style="position:absolute;left:668px;top:108px;width:146px;height:26px;background:#535353;border-bottom:1px solid #484848"></div>
<div style="position:absolute;left:675px;top:110px;width:9px;height:18px;background:#ddd;border:1px solid #333"></div>
<div style="position:absolute;left:678px;top:113px;width:3px;height:12px;background:#fff"></div>
<div class="t" style="left:690px;top:115px;"><b class="z" style="width:26.0px">БИЙБ</b></div>
<svg style="left:777px;top:113px" width="30" height="11"><rect x="1" y="1" width="6" height="6" fill="none" stroke="#eee" stroke-width="1.3"/><rect x="5" y="5" width="4" height="4" fill="#eee"/><rect x="16" y="1" width="9" height="9" fill="#eee"/><rect x="18.5" y="3.5" width="4" height="4" fill="#333"/></svg>
<div class="t" style="left:675px;top:146px;"><b class="z" style="width:13.0px">ДД</b> :</div>
<div class="t" style="left:772px;top:146px;">100%</div>
<div style="position:absolute;left:676px;top:155px;width:127px;height:1px;background:#3c3c3c"></div>
<div style="position:absolute;left:676px;top:156px;width:127px;height:1px;background:#6a6a6a"></div>
<svg style="left:795px;top:152px" width="10" height="8"><path d="M5 1L9 7H1z" fill="#f0f0f0" stroke="#222" stroke-width="0.5"/></svg>
<div class="t" style="left:675px;top:172px;"><b class="z" style="width:13.0px">ДЯ</b> :</div>
<div class="t" style="left:772px;top:172px;">0.0 <b class="z" style="width:13.0px">ПЦ</b></div>
<div style="position:absolute;left:676px;top:181px;width:127px;height:1px;background:#3c3c3c"></div>
<div style="position:absolute;left:676px;top:182px;width:127px;height:1px;background:#6a6a6a"></div>
<svg style="left:670px;top:179px" width="10" height="8"><path d="M5 1L9 7H1z" fill="#f0f0f0" stroke="#222" stroke-width="0.5"/></svg>
<div class="t" style="left:674px;top:198px;color:#aaa"><b class="z" style="width:13.0px">ИН</b>:</div>
<div style="position:absolute;left:745px;top:199px;width:59px;height:10px;background:#4e4e4e;border:1px solid #4a4a4a"></div>
<div class="t" style="left:754px;top:200px;opacity:.55"><b class="z" style="width:32.5px">ЦПДПЦ</b></div>
<div style="position:absolute;left:745px;top:213px;width:59px;height:10px;background:#4e4e4e;border:1px solid #4a4a4a"></div>
<div class="t" style="left:758px;top:214px;opacity:.55"><b class="z" style="width:26.0px">ЙЯЭЙ</b></div>
<div style="position:absolute;left:745px;top:228px;width:59px;height:10px;background:#4e4e4e;border:1px solid #4a4a4a"></div>
<div class="t" style="left:766px;top:229px;opacity:.55"><b class="z" style="width:13.0px">ЯБ</b></div>
<div style="position:absolute;left:668px;top:251px;width:141px;height:1px;background:#4a4a4a"></div>
<div style="position:absolute;left:809px;top:90px;width:1px;height:177px;background:#454545"></div>
<div style="position:absolute;left:668px;top:266px;width:141px;height:1px;background:#484848"></div>
<svg style="left:744px;top:254px" width="64" height="12" stroke="#cfcfcf" fill="#cfcfcf">
<path d="M3 2v8M6 2v8M9 2v8" stroke-width="1" stroke="#b8b8b8"/>
<path d="M20 6h8M24 2v8" stroke-width="2" stroke="#9a9a9a"/>
<rect x="33" y="0" width="14" height="12" fill="#3a3a3a" stroke="none"/>
<ellipse cx="40" cy="6" rx="5" ry="3" fill="#f0f0f0" stroke="none"/><circle cx="40" cy="6" r="1.6" fill="#222" stroke="none"/>
<path d="M51 3h6M52 4h4v7h-4z" stroke-width="1" fill="none"/>
</svg>
<div style="position:absolute;left:815px;top:31px;width:185px;height:429px;background:#535353"></div>
<div style="position:absolute;left:815px;top:31px;width:185px;height:7px;background:#434343"></div>
<div class="t" style="left:829px;top:30px;font-size:7px;color:#bbb;line-height:8px">»</div>
<div class="t" style="left:956px;top:30px;font-size:7px;color:#bbb;line-height:8px">»</div>
<div class="t" style="left:993px;top:30px;font-size:7px;color:#bbb;line-height:8px">»</div>
<div style="position:absolute;left:816px;top:38px;width:21px;height:394px;background:#535353;border-left:1px solid #3c3c3c;border-right:1px solid #3c3c3c"></div>
<div style="position:absolute;left:695px;top:431px;width:143px;height:1px;background:#4c4c4c"></div>
<div style="position:absolute;left:837px;top:38px;width:1px;height:394px;background:#3c3c3c"></div>
<div style="position:absolute;left:847px;top:426px;width:1px;height:34px;background:#474747"></div>
<div style="position:absolute;left:966px;top:38px;width:1px;height:422px;background:#3c3c3c"></div>
<div style="position:absolute;left:818px;top:77px;width:17px;height:1px;background:#444"></div>
<div style="position:absolute;left:818px;top:98px;width:17px;height:1px;background:#444"></div>
<div style="position:absolute;left:818px;top:118px;width:17px;height:1px;background:#444"></div>
<div style="position:absolute;left:818px;top:138px;width:17px;height:1px;background:#444"></div>
<div style="position:absolute;left:818px;top:157px;width:17px;height:1px;background:#444"></div>
<div style="position:absolute;left:818px;top:192px;width:17px;height:1px;background:#444"></div>
<div style="position:absolute;left:818px;top:81px;width:17px;height:13px;background:#3b3b3b"></div>
<svg style="left:816px;top:38px" width="21" height="180">
<circle cx="10" cy="13" r="2.5" fill="#ddd"/><path d="M10 8v2M10 16v2M5 13h2M13 13h2M6.5 9.5l1.4 1.4M12 15l1.4 1.4M6.5 16.5l1.4-1.4M12 11l1.4-1.4" stroke="#ddd"/>
<path d="M4 32h12v-4l-2-2-2 2-2-3-2 3-2-2-2 2z" fill="#e6e6e6"/>
<path d="M5 50h4M11 50h3M5 54h10" stroke="#eee" stroke-width="1.5"/><path d="M7 48v4M13 48v4" stroke="#eee"/>
<rect x="5" y="66" width="6" height="7" fill="none" stroke="#ddd"/><rect x="9" y="70" width="6" height="7" fill="#535353" stroke="#ddd"/>
<path d="M7 86h6v6h-6z" fill="#e8e8e8"/><path d="M6 84l2-2M12 82l2 2M9 81v-2" stroke="#ddd"/>
<path d="M4 107h12M6 104h4M11 110h4" stroke="#e8e8e8" stroke-width="1.2"/><circle cx="12" cy="107" r="1.5" fill="#e8e8e8"/>
<text x="4" y="131" font-size="10" fill="#ddd" font-family="Liberation Sans">A</text><path d="M14 123v9" stroke="#ddd"/>
<path d="M8 140h5v9h-2v-6h-3a2 2 0 0 1 0-3z" fill="#e0e0e0"/><path d="M13 140v9" stroke="#e0e0e0"/>
<text x="4" y="168" font-size="11" fill="#ddd" font-family="Liberation Serif">A</text>
</svg>
<div style="position:absolute;left:838px;top:38px;width:128px;height:127px;background:#535353"></div>
<div style="position:absolute;left:838px;top:39px;width:128px;height:14px;background:#424242"></div>
<div style="position:absolute;left:840px;top:40px;width:19px;height:13px;background:#535353"></div>
<div style="position:absolute;left:838px;top:51px;width:128px;height:2px;background:#4a4a4a"></div>
<div class="t" style="left:843px;top:42px;"><b class="z" style="width:13.0px">ДЙ</b></div>
<div class="t" style="left:864px;top:42px;opacity:.7"><b class="z" style="width:13.0px">ИП</b></div>
<div class="t" style="left:955px;top:41px;font-size:8px;color:#bbb">≡</div>
<div style="position:absolute;left:848px;top:64px;width:10px;height:10px;background:#1a0610;border:1px solid #9a9a9a"></div>
<div style="position:absolute;left:842px;top:59px;width:10px;height:10px;background:#f0b8c8;border:1px solid #d0d0d0"></div>
<div style="position:absolute;left:861px;top:56px;width:77px;height:106px;background:linear-gradient(to bottom,rgba(0,0,0,0) 0%,rgba(0,0,0,.22) 25%,rgba(0,0,0,.47) 50%,rgba(0,0,0,.72) 75%,#000 100%),linear-gradient(to right,#fff,#f60058)"></div>
<svg style="left:911px;top:133px" width="12" height="12"><circle cx="6" cy="6" r="3.5" fill="none" stroke="#d8b0c0" stroke-width="1"/></svg>
<div style="position:absolute;left:946px;top:56px;width:11px;height:106px;box-shadow:0 0 0 1px #3a3a3a;background:linear-gradient(to bottom,#ff0000 0%,#ff00ff 17%,#0000ff 33%,#00ffff 50%,#00ff00 67%,#ffff00 83%,#ff0000 100%)"></div>
<div style="position:absolute;left:940px;top:59px;width:4px;height:4px;background:#f4f4f4"></div>
<div style="position:absolute;left:838px;top:165px;width:128px;height:84px;background:#535353;border-top:1px solid #3c3c3c"></div>
<div style="position:absolute;left:838px;top:166px;width:128px;height:14px;background:#424242"></div>
<div style="position:absolute;left:859px;top:166px;width:22px;height:14px;background:#535353"></div>
<div class="t" style="left:842px;top:169px;opacity:.7"><b class="z" style="width:13.0px">ЦЙ</b></div>
<div class="t" style="left:863px;top:169px;"><b class="z" style="width:13.0px">ПЙ</b></div>
<div class="t" style="left:955px;top:168px;font-size:8px;color:#bbb">≡</div>
<div style="position:absolute;left:841px;top:186px;width:10px;height:10px;background:linear-gradient(135deg,#fff 45%,#d22 45%,#d22 55%,#fff 55%);border:1px solid rgba(40,40,40,.5)"></div>
<div style="position:absolute;left:857px;top:186px;width:10px;height:10px;background:#4d4d4d"></div>
<div style="position:absolute;left:874px;top:186px;width:10px;height:10px;background:linear-gradient(#6fd8f0,#3aaed0);border:1px solid rgba(40,40,40,.5)"></div>
<div style="position:absolute;left:890px;top:186px;width:10px;height:10px;background:linear-gradient(#a8e6ff,#5ab8e8);border:1px solid rgba(40,40,40,.5)"></div>
<div style="position:absolute;left:907px;top:186px;width:10px;height:10px;background:linear-gradient(#f4f8ff,#c8d8e8);border:1px solid rgba(40,40,40,.5)"></div>
<div style="position:absolute;left:923px;top:186px;width:10px;height:10px;background:linear-gradient(90deg,#f8f0d0 60%,#8a4aa0 60%);border:1px solid rgba(40,40,40,.5)"></div>
<div style="position:absolute;left:940px;top:186px;width:10px;height:10px;background:linear-gradient(90deg,#888 20%,#e8e060 20%,#e8e060 60%,#d070c0 60%);border:1px solid rgba(40,40,40,.5)"></div>
<div style="position:absolute;left:841px;top:204px;width:10px;height:10px;background:linear-gradient(135deg,#fff 20%,#333 50%,#e8d000 80%);border:1px solid rgba(40,40,40,.5)"></div>
<div style="position:absolute;left:857px;top:204px;width:10px;height:10px;background:linear-gradient(#ff6060,#900);border:1px solid rgba(40,40,40,.5)"></div>
<div style="position:absolute;left:874px;top:204px;width:10px;height:10px;background:#575757"></div>
<div style="position:absolute;left:890px;top:204px;width:10px;height:10px;background:#575757"></div>
<div style="position:absolute;left:907px;top:204px;width:10px;height:10px;background:#575757"></div>
<div style="position:absolute;left:923px;top:204px;width:10px;height:10px;background:radial-gradient(#ff40a0,#602060);border:1px solid rgba(40,40,40,.5)"></div>
<div style="position:absolute;left:940px;top:204px;width:10px;height:10px;background:#4a4a4a;border:1px solid rgba(40,40,40,.5)"></div>
<div style="position:absolute;left:841px;top:221px;width:10px;height:10px;background:linear-gradient(#ddd 40%,#000 40%);border:1px solid rgba(40,40,40,.5)"></div>
<div style="position:absolute;left:857px;top:221px;width:10px;height:10px;background:linear-gradient(#3b9be0,#1a5aa0);border:1px solid rgba(40,40,40,.5)"></div>
<div style="position:absolute;left:874px;top:221px;width:10px;height:10px;background:linear-gradient(#b8b8c8,#8888a0);border:1px solid rgba(40,40,40,.5)"></div>
<div style="position:absolute;left:890px;top:221px;width:10px;height:10px;background:linear-gradient(#666 50%,#334 50%);border:1px solid rgba(40,40,40,.5)"></div>
<div style="position:absolute;left:907px;top:221px;width:10px;height:10px;background:#6a5a2a;border:1px solid rgba(40,40,40,.5)"></div>
<div style="position:absolute;left:923px;top:221px;width:10px;height:10px;background:linear-gradient(#c8a060,#7a5a3a);border:1px solid rgba(40,40,40,.5)"></div>
<div style="position:absolute;left:940px;top:221px;width:10px;height:10px;background:linear-gradient(#d02050,#701030);border:1px solid rgba(40,40,40,.5)"></div>
<div style="position:absolute;left:939px;top:203px;width:12px;height:12px;border:2px solid #c8c8c8;border-radius:2px;background:#555"></div>
<div style="position:absolute;left:957px;top:185px;width:5px;height:36px;background:#4a4a4a"></div>
<div style="position:absolute;left:958px;top:188px;width:3px;height:30px;background:#6a6a6a"></div>
<svg style="left:908px;top:234px" width="50" height="12" fill="none" stroke="#ddd" stroke-width="1.2">
<circle cx="6" cy="6" r="4"/><path d="M4 8l4-4"/>
<path d="M20 3h5v7M20 3v4"/><rect x="37" y="3" width="6" height="8" stroke="#888"/></svg>
<div style="position:absolute;left:838px;top:249px;width:128px;height:118px;background:#535353;border-top:1px solid #3c3c3c"></div>
<div style="position:absolute;left:838px;top:250px;width:128px;height:12px;background:#424242"></div>
<div style="position:absolute;left:839px;top:250px;width:29px;height:12px;background:#535353"></div>
<div class="t" style="left:842px;top:252px;"><b class="z" style="width:26.0px">ДББИ</b></div>
<div class="t" style="left:874px;top:252px;opacity:.7"><b class="z" style="width:13.0px">НЭ</b></div>
<div class="t" style="left:955px;top:251px;font-size:8px;color:#bbb">≡</div>
<div style="position:absolute;left:840px;top:262px;width:116px;height:92px;background:#4f4f4f"></div>
<div style="position:absolute;left:840px;top:270px;width:116px;height:1px;background:#464646"></div>
<div style="position:absolute;left:855px;top:262px;width:8px;height:5px;background:#e0e0e0"></div>
<div style="position:absolute;left:840px;top:281px;width:116px;height:1px;background:#464646"></div>
<div style="position:absolute;left:843px;top:273px;width:5px;height:6px;border:1px solid #444"></div>
<svg style="left:854px;top:271px" width="10" height="10"><path d="M1 1h6l2 2v6H1z" fill="#e6e6e6" stroke="#666" stroke-width=".6"/><path d="M2.5 3.5h5M2.5 5.5h5M2.5 7.5h5" stroke="#777" stroke-width=".8"/></svg>
<div class="t" style="left:868px;top:272px;"><b class="z" style="width:26.0px">ЦЭПН</b></div>
<div style="position:absolute;left:840px;top:293px;width:116px;height:1px;background:#464646"></div>
<div style="position:absolute;left:843px;top:285px;width:5px;height:6px;border:1px solid #444"></div>
<svg style="left:854px;top:283px" width="10" height="10"><path d="M1 1h6l2 2v6H1z" fill="#e6e6e6" stroke="#666" stroke-width=".6"/><path d="M2.5 3.5h5M2.5 5.5h5M2.5 7.5h5" stroke="#777" stroke-width=".8"/></svg>
<div class="t" style="left:868px;top:284px;"><b class="z" style="width:26.0px">ДЦБИ</b></div>
<div style="position:absolute;left:840px;top:305px;width:116px;height:1px;background:#464646"></div>
<div style="position:absolute;left:843px;top:297px;width:5px;height:6px;border:1px solid #444"></div>
<svg style="left:854px;top:295px" width="10" height="10"><path d="M1 1h6l2 2v6H1z" fill="#e6e6e6" stroke="#666" stroke-width=".6"/><path d="M2.5 3.5h5M2.5 5.5h5M2.5 7.5h5" stroke="#777" stroke-width=".8"/></svg>
<div class="t" style="left:868px;top:296px;"><b class="z" style="width:26.0px">ДЦЦЙ</b></div>
<div style="position:absolute;left:840px;top:317px;width:116px;height:1px;background:#464646"></div>
<div style="position:absolute;left:843px;top:309px;width:5px;height:6px;border:1px solid #444"></div>
<svg style="left:854px;top:307px" width="10" height="10"><path d="M1 1h6l2 2v6H1z" fill="#e6e6e6" stroke="#666" stroke-width=".6"/><path d="M2.5 3.5h5M2.5 5.5h5M2.5 7.5h5" stroke="#777" stroke-width=".8"/></svg>
<div class="t" style="left:868px;top:308px;"><b class="z" style="width:26.0px">ЦДПД</b></div>
<div style="position:absolute;left:840px;top:329px;width:116px;height:1px;background:#464646"></div>
<div style="position:absolute;left:843px;top:321px;width:5px;height:6px;border:1px solid #444"></div>
<svg style="left:854px;top:319px" width="10" height="10"><path d="M1 1h6l2 2v6H1z" fill="#e6e6e6" stroke="#666" stroke-width=".6"/><path d="M2.5 3.5h5M2.5 5.5h5M2.5 7.5h5" stroke="#777" stroke-width=".8"/></svg>
<div class="t" style="left:868px;top:320px;"><b class="z" style="width:26.0px">ПББЙ</b></div>
<div style="position:absolute;left:840px;top:341px;width:116px;height:1px;background:#464646"></div>
<div style="position:absolute;left:843px;top:333px;width:5px;height:6px;border:1px solid #444"></div>
<svg style="left:854px;top:331px" width="10" height="10"><path d="M1 1h6l2 2v6H1z" fill="#e6e6e6" stroke="#666" stroke-width=".6"/><path d="M2.5 3.5h5M2.5 5.5h5M2.5 7.5h5" stroke="#777" stroke-width=".8"/></svg>
<div class="t" style="left:868px;top:332px;"><b class="z" style="width:26.0px">ПЙЦБ</b></div>
<div style="position:absolute;left:840px;top:342px;width:116px;height:12px;background:#6c6c6c"></div>
<div style="position:absolute;left:843px;top:345px;width:5px;height:6px;border:1px solid #444"></div>
<svg style="left:854px;top:343px" width="10" height="10"><path d="M1 1h6l2 2v6H1z" fill="#e6e6e6" stroke="#666" stroke-width=".6"/><path d="M2.5 3.5h5M2.5 5.5h5M2.5 7.5h5" stroke="#777" stroke-width=".8"/></svg>
<div class="t" style="left:868px;top:344px;"><b class="z" style="width:26.0px">ДЙЙЙ</b></div>
<div style="position:absolute;left:838px;top:250px;width:128px;height:12px;background:#424242"></div>
<div style="position:absolute;left:839px;top:250px;width:29px;height:12px;background:#535353"></div>
<div class="t" style="left:842px;top:252px;"><b class="z" style="width:26.0px">ЦДЦП</b></div>
<div class="t" style="left:874px;top:252px;opacity:.7"><b class="z" style="width:13.0px">ЙЙ</b></div>
<div class="t" style="left:955px;top:251px;font-size:8px;color:#bbb">≡</div>
<div style="position:absolute;left:957px;top:263px;width:5px;height:91px;background:#4a4a4a"></div>
<div style="position:absolute;left:958px;top:316px;width:3px;height:36px;background:#6a6a6a"></div>
<svg style="left:908px;top:354px" width="50" height="12" fill="#ddd" stroke="#ddd">
<rect x="4" y="4" width="7" height="6" stroke="none"/><path d="M6 2h4" />
<rect x="20" y="4" width="8" height="6" fill="none" stroke-width="1.2"/><circle cx="24" cy="7" r="1.5"/>
<rect x="36" y="3" width="6" height="8" fill="none"/></svg>
<div style="position:absolute;left:838px;top:367px;width:128px;height:93px;background:#535353;border-top:1px solid #3c3c3c"></div>
<div style="position:absolute;left:838px;top:369px;width:128px;height:13px;background:#424242"></div>
<div style="position:absolute;left:839px;top:369px;width:20px;height:13px;background:#535353"></div>
<div class="t" style="left:842px;top:372px;"><b class="z" style="width:13.0px">НЦ</b></div>
<div class="t" style="left:863px;top:372px;opacity:.7"><b class="z" style="width:13.0px">ЦД</b></div>
<div class="t" style="left:885px;top:372px;opacity:.7"><b class="z" style="width:13.0px">ПЦ</b></div>
<div class="t" style="left:955px;top:371px;font-size:8px;color:#bbb">≡</div>
<div style="position:absolute;left:841px;top:385px;width:42px;height:12px;background:#4a4a4a"></div>
<svg style="left:843px;top:387px" width="8" height="8"><circle cx="4.5" cy="3.5" r="2.3" fill="none" stroke="#ccc" stroke-width="1.1"/><path d="M3 5L1 7.5" stroke="#ccc" stroke-width="1.2"/></svg>
<div class="t" style="left:853px;top:387px;"><b class="z" style="width:13.0px">ЭД</b></div>
<div style="position:absolute;left:877.5px;top:390px;width:0;height:0;border-left:2.5px solid transparent;border-right:2.5px solid transparent;border-top:3px solid #aaa"></div>
<svg style="left:888px;top:384px" width="78" height="14" fill="none" stroke="#d8d8d8" stroke-width="1">
<rect x="4" y="4" width="8" height="6" fill="#cfcfcf" stroke="none"/><path d="M5 11h6" stroke="#aaa"/>
<circle cx="20" cy="7" r="3.2"/><path d="M20 3.8a3.2 3.2 0 0 1 0 6.4z" fill="#d8d8d8" stroke="none"/>
<path d="M28 3.5h6M31 3.5v7" stroke-width="1.2"/><rect x="41.5" y="3.5" width="6" height="6"/>
<rect x="55" y="6" width="5" height="5" fill="#d8d8d8" stroke="none"/><path d="M56 6V4.5a1.5 1.5 0 0 1 3 0V6"/>
<circle cx="73" cy="5" r="2.8" fill="#eee" stroke="none"/></svg>
<div style="position:absolute;left:841px;top:399px;width:58px;height:12px;background:#4a4a4a"></div>
<div class="t" style="left:844px;top:401px;"><b class="z" style="width:13.0px">БП</b></div>
<div style="position:absolute;left:890.5px;top:404px;width:0;height:0;border-left:2.5px solid transparent;border-right:2.5px solid transparent;border-top:3px solid #aaa"></div>
<div class="t" style="left:905px;top:401px;opacity:.8"><b class="z" style="width:26.0px">ДЯЙЭ</b>: 100%</div>
<div style="position:absolute;left:841px;top:413px;width:18px;height:12px;"></div>
<div class="t" style="left:843px;top:415px;opacity:.6"><b class="z" style="width:13.0px">ЙЯ</b>:</div>
<svg style="left:858px;top:413px" width="58" height="13" fill="none" stroke="#c8c8c8" stroke-width="1">
<rect x="2.5" y="3.5" width="5" height="5" stroke-dasharray="1 1"/><path d="M12 10l5-6" stroke-width="1.2"/><path d="M24 6.5h7M27.5 3v7M25.5 4.5l2-2 2 2M25.5 8.5l2 2 2-2" stroke-width="1"/><rect x="36.5" y="3.5" width="6" height="6"/>
<rect x="47" y="6" width="6" height="5" fill="#d8d8d8" stroke="none"/><path d="M48 6V4.5a2 2 0 0 1 4 0V6"/></svg>
<div class="t" style="left:918px;top:415px;opacity:.8"><b class="z" style="width:13.0px">НН</b>: 100%</div>
<div style="position:absolute;left:958.5px;top:404px;width:0;height:0;border-left:2.5px solid transparent;border-right:2.5px solid transparent;border-top:3px solid #aaa"></div>
<div style="position:absolute;left:958.5px;top:418px;width:0;height:0;border-left:2.5px solid transparent;border-right:2.5px solid transparent;border-top:3px solid #aaa"></div>
<div style="position:absolute;left:863px;top:427px;width:103px;height:14px;background:#535353;border-top:1px solid #474747"></div>
<svg style="left:878px;top:429px" width="12" height="10"><path d="M1 5Q6 0 11 5Q6 10 1 5z" fill="none" stroke="#ddd"/><circle cx="6" cy="5" r="1.8" fill="#ddd"/></svg>
<div class="t" style="left:893px;top:431px;"><b class="z" style="width:13.0px">ПБ</b></div>
<div style="position:absolute;left:863px;top:441px;width:103px;height:19px;background:#535353;border-top:1px solid #474747"></div>
<div style="position:absolute;left:872px;top:443px;width:10px;height:16px;background:linear-gradient(#3cd4e0 60%,#e8f0f0 60%);border:1px solid #999"></div>
<div class="t" style="left:888px;top:447px;"><b class="z" style="width:13.0px">ЭП</b> 1 <b class="z" style="width:13.0px">НИ</b></div>
<div style="position:absolute;left:864px;top:432px;width:16px;height:28px;background:#4a4644"></div>
<svg style="left:862px;top:430px" width="12" height="20"><path d="M8 1a9 9 0 0 0 0 18a6 9 0 0 1 0-18z" fill="#d8d4d0"/></svg>
<div style="position:absolute;left:868px;top:452px;width:14px;height:8px;background:#d8d0d0"></div>
<div style="position:absolute;left:872px;top:441px;width:10px;height:11px;background:linear-gradient(#2a6a70 20%,#40d8d8 20%)"></div>
<svg style="left:925px;top:432px" width="75" height="28">
<circle cx="12" cy="20" r="5" fill="#b89a58"/>
<path d="M20 28 Q18 14 30 10 Q44 6 50 28z" fill="#c8305a"/>
<path d="M21 16 Q26 6 34 10 L30 16z" fill="#f0e0e8"/>
<path d="M36 9 Q44 4 46 14 L38 15z" fill="#f4e4ec"/>
<path d="M28 20 Q34 16 40 22 Q34 26 28 20z" fill="#f0c0d0"/>
<circle cx="60" cy="17" r="6.5" fill="#f0d4d4" stroke="#9a6050" stroke-width="1.2"/>
</svg>
<svg style="left:986px;top:403px" width="20" height="28"><circle cx="14" cy="15" r="11" fill="#444"/><circle cx="14" cy="15" r="10" fill="#38b04c" stroke="#e8e8e8" stroke-width="1.3"/><text x="7" y="18" font-size="6" fill="#e8f8e8" font-family="Liberation Sans">TU</text></svg>
<svg style="left:968px;top:44px" width="30" height="14"><circle cx="8" cy="7" r="5" fill="#ddd"/><path d="M5 6h6M5 8h6" stroke="#888"/><rect x="19" y="4" width="5" height="6" fill="#ccc"/></svg>
</div></body></html>
